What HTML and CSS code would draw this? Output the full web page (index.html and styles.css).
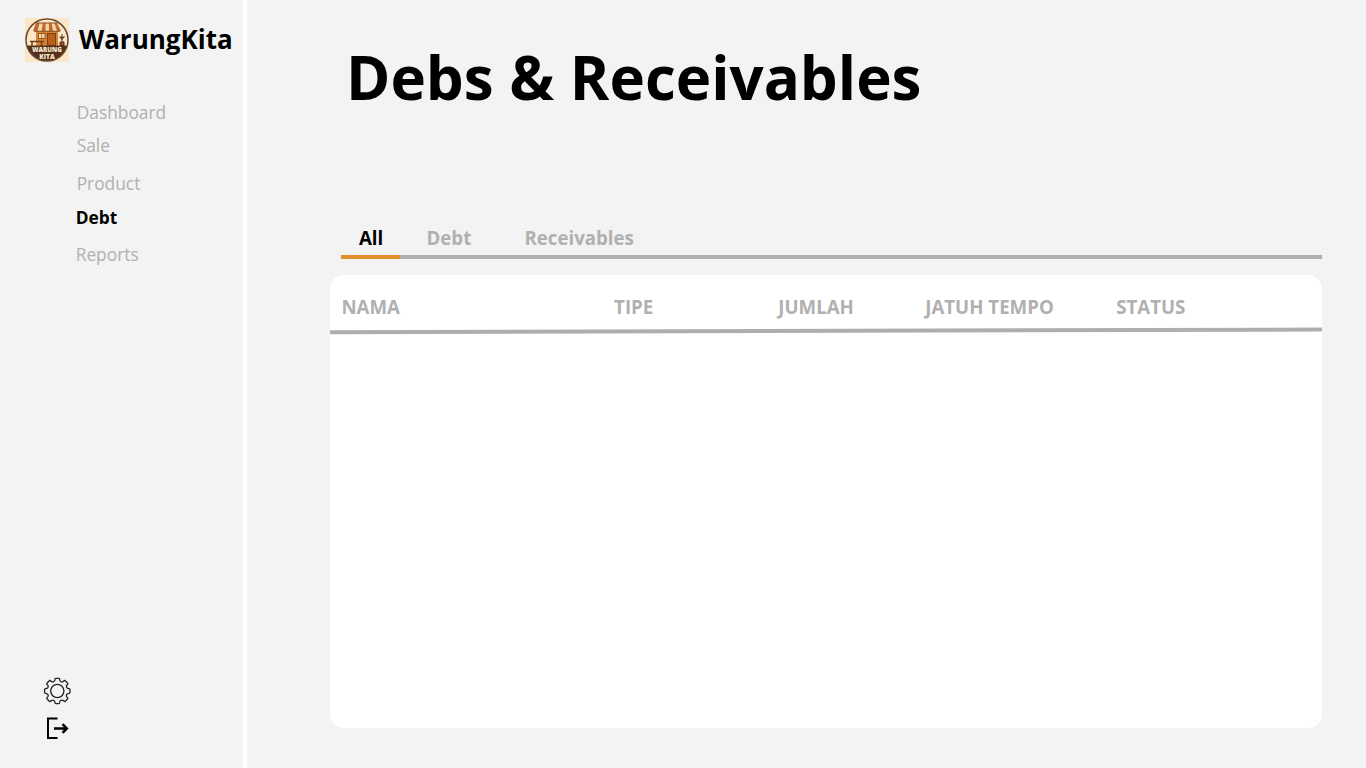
FILE: index.html
```html
<!DOCTYPE html>
<html lang="en">
<head>
<meta charset="utf-8">
<title>WarungKita</title>
<link rel="stylesheet" href="styles.css">
</head>
<body>
<aside class="sidebar">
  <div class="brand">
    <svg class="logo" viewBox="0 0 44 44" role="img" aria-label="Warung Kita">
      <defs><clipPath id="disc"><circle cx="22" cy="22" r="21"/></clipPath></defs>
      <rect width="44" height="44" fill="#fbe6c8"/>
      <g clip-path="url(#disc)">
        <rect x="11" y="11" width="22" height="17" fill="#d98330"/>
        <path d="M11 5h21l4 8H8z" fill="#f3d3a4"/>
        <path d="M11 5h3.500l-2 8H8zM18 5h2.500v8h-4zM24 5h2.500l1.500 8h-4zM29.500 5H32l4 8h-4z" fill="#c1682c"/>
        <path d="M11 5h22" stroke="#8a4c20" stroke-width="1"/>
        <path d="M9 13.300h26" stroke="#8a4f24" stroke-width="1"/>
        <rect x="13.500" y="15.500" width="6.500" height="5" fill="#f9dfb5" stroke="#94591f" stroke-width="1"/>
        <path d="M16.700 15.500v5" stroke="#94591f" stroke-width=".8"/>
        <rect x="22.500" y="15.500" width="8" height="12" fill="#b9601a" stroke="#75401b" stroke-width="1"/>
        <path d="M5 23.500h14M7 24v4M16.500 24v4" stroke="#6b3c1b" stroke-width="1.500"/>
        <path d="M37 16v8M34.500 18.500l2.500 3 2.500-3M35 24h4v3.500h-4z" stroke="#5b351e" stroke-width="1" fill="#8a542b"/>
        <rect y="27.500" width="44" height="17" fill="#55301c"/>
      </g>
      <circle cx="22" cy="22" r="21" fill="none" stroke="#6b4730" stroke-width="1.500"/>
      <text x="22" y="34.200" class="logo-text" textLength="30" lengthAdjust="spacingAndGlyphs">WARUNG</text>
      <text x="22" y="40.500" class="logo-text" textLength="15.500" lengthAdjust="spacingAndGlyphs">KITA</text>
    </svg>
    <span class="brand-name">WarungKita</span>
  </div>
  <nav class="nav">
    <a class="nav-item">Dashboard</a>
    <a class="nav-item nav-sale">Sale</a>
    <a class="nav-item nav-product">Product</a>
    <a class="nav-item nav-debt active">Debt</a>
    <a class="nav-item nav-reports">Reports</a>
  </nav>
  <div class="actions">
    <svg class="gear" viewBox="-14.300 -14 28 28" fill="none" stroke="#222" stroke-width="1.300" stroke-linejoin="round">
      <circle r="6.600"/>
      <path d="M-1.500-12.700H1.500Q2.200-12.700 2.300-11.800Q2.300-10 3.600-9.300Q5-8.600 6.200-9.800Q7.300-11 8-10.200L10.200-8Q11-7.300 9.800-6.200Q8.600-5 9.300-3.600Q10-2.300 11.800-2.300Q12.700-2.200 12.700-1.500V1.500Q12.700 2.200 11.800 2.300Q10 2.300 9.300 3.600Q8.600 5 9.800 6.200Q11 7.300 10.200 8L8 10.200Q7.300 11 6.200 9.800Q5 8.600 3.600 9.300Q2.300 10 2.300 11.800Q2.200 12.700 1.500 12.700H-1.500Q-2.200 12.700-2.300 11.800Q-2.300 10-3.600 9.300Q-5 8.600-6.200 9.800Q-7.300 11-8 10.200L-10.200 8Q-11 7.300-9.800 6.200Q-8.600 5-9.300 3.600Q-10 2.300-11.800 2.300Q-12.700 2.200-12.700 1.500V-1.500Q-12.700-2.200-11.800-2.300Q-10-2.300-9.300-3.600Q-8.600-5-9.800-6.200Q-11-7.300-10.200-8L-8-10.200Q-7.300-11-6.200-9.800Q-5-8.600-3.600-9.300Q-2.300-10-2.300-11.800Q-2.200-12.700-1.500-12.700Z"/>
    </svg>
    <svg class="exit" viewBox="0 0 24 24" fill="none" stroke="#000" stroke-width="2">
      <path d="M11.500 2.500H2v19.500h9.500"/>
      <path d="M8 12.500h12.500M16.500 8.200l4.300 4.300-4.300 4.300" stroke-width="2.500"/>
    </svg>
  </div>
</aside>
<main class="main">
  <h1 class="title">Debs &amp; Receivables</h1>
  <div class="tabs">
    <a class="tab tab-all">All</a>
    <a class="tab tab-debt">Debt</a>
    <a class="tab">Receivables</a>
  </div>
  <section class="card">
    <div class="head">
      <span>NAMA</span><span>TIPE</span><span>JUMLAH</span><span>JATUH TEMPO</span><span>STATUS</span>
    </div>
    <svg class="rule" viewBox="0 0 992 8"><path d="M0 5.300L992 2.500" stroke="#aeaeae" stroke-width="4"/></svg>
  </section>
</main>
</body>
</html>
```
FILE: styles.css
```css
* { box-sizing: border-box; }
body {
  margin: 0;
  height: 768px;
  display: flex;
  overflow: hidden;
  background: #f3f3f3;
  color: #000;
  font-family: "Open Sans", "Noto Sans", sans-serif;
}
.sidebar {
  width: 247px;
  height: 768px;
  flex: none;
  display: flex;
  flex-direction: column;
  border-right: 4px solid #fff;
}
.brand {
  display: flex;
  align-items: flex-start;
  gap: 10px;
  height: 62px;
  padding: 17.500px 0 0 25px;
}
.logo { width: 44px; height: 44px; flex: none; }
.logo-text {
  font-family: "Open Sans", sans-serif;
  font-size: 6.600px;
  font-weight: 800;
  fill: #fbe9cf;
  text-anchor: middle;
}
.brand-name { font-size: 26px; line-height: 43px; font-weight: 700; }
.nav {
  display: flex;
  flex-direction: column;
  padding: 38px 0 0 76.700px;
}
.nav-item { font-size: 17.330px; line-height: 24px; color: #b0b0b0; }
.nav-sale { margin-top: 9px; }
.nav-product { margin-top: 14px; }
.nav-debt { margin: 10px 0 0 -1px; }
.nav-reports { margin: 13px 0 0 -1px; }
.active { color: #000; font-weight: 700; }
.actions {
  display: flex;
  flex-direction: column;
  gap: 11px;
  margin-top: auto;
  padding: 0 0 28px 43px;
}
.gear { width: 28px; height: 28px; }
.exit { width: 24px; height: 24px; margin-left: 3px; }
.main { width: 1119px; padding: 35px 44px 0 83px; }
.title {
  margin: 0 0 0 16px;
  font-size: 60px;
  line-height: 84px;
  font-weight: 700;
  white-space: nowrap;
}
.tabs {
  display: flex;
  height: 44px;
  margin: 96px 0 0 11px;
  border-bottom: 4px solid #aeaeae;
  color: #b0b0b0;
  font-size: 18.670px;
  line-height: 26px;
  font-weight: 700;
}
.tab { padding-top: 10px; height: 44px; }
.tab-all {
  width: 59px;
  margin-right: 26.500px;
  padding-left: 18px;
  border-bottom: 4px solid #e18e2c;
  color: #000;
}
.tab-debt { width: 98px; }
.card {
  height: 453px;
  margin-top: 16px;
  padding-top: 19px;
  border-radius: 14px;
  background: #fff;
}
.head {
  display: grid;
  grid-template-columns: 272.700px 164.200px 147px 191px 1fr;
  padding-left: 11.400px;
  color: #b0b0b0;
  font-size: 18.670px;
  line-height: 26px;
  font-weight: 700;
}
.rule { display: block; width: 992px; height: 8px; margin-top: 7px; }
```
